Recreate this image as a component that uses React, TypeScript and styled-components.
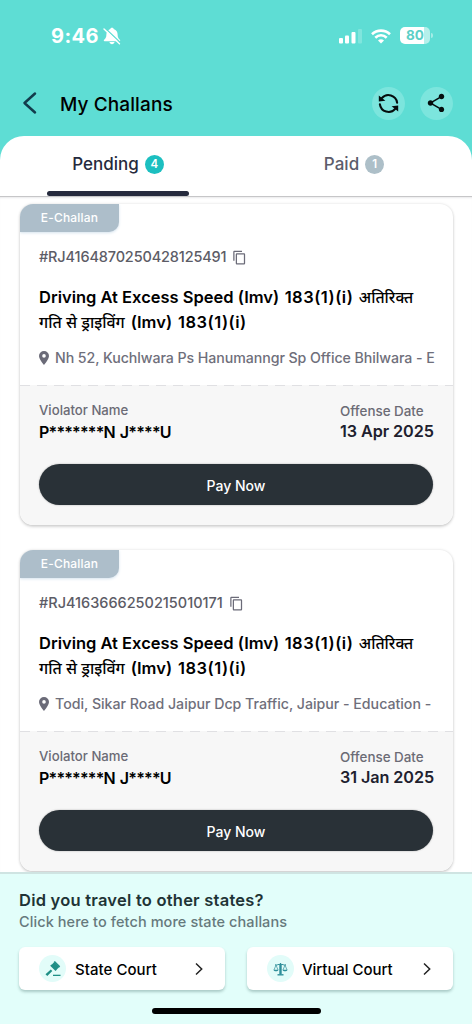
import React from "react";
import styled, { createGlobalStyle } from "styled-components";
import { MdContentCopy, MdShare } from "react-icons/md";

const GlobalStyle = createGlobalStyle`
  * { box-sizing: border-box; }
  body { margin: 0; background: #fff; font-family: Inter, "Noto Sans", sans-serif; }
  button { font-family: inherit; border: 0; padding: 0; }
`;

const Screen = styled.div`
  width: 472px;
  height: 1024px;
  display: flex;
  flex-direction: column;
  overflow: hidden;
  background: #fff;
`;

const Text = styled.span<{ $size: number; $ls?: number; $ws?: number; $weight?: number; $color?: string; $line?: number }>`
  display: block;
  white-space: nowrap;
  font-size: ${(p) => p.$size}px;
  letter-spacing: ${(p) => p.$ls ?? 0}px;
  word-spacing: ${(p) => p.$ws ?? 0}px;
  font-weight: ${(p) => p.$weight ?? 500};
  color: ${(p) => p.$color ?? "#000"};
  line-height: ${(p) => p.$line ?? 20}px;
`;

const Top = styled.header`
  flex: none;
  background: #5eddd4;
`;

const StatusBar = styled.div`
  height: 70px;
  padding: 2px 39px 0 51px;
  display: flex;
  align-items: center;
  justify-content: space-between;
`;

const StatusGroup = styled.div<{ $gap: number }>`
  display: flex;
  align-items: center;
  gap: ${(p) => p.$gap}px;
`;

const Battery = styled.div`
  width: 30px;
  height: 17px;
  border-radius: 5px;
  background: linear-gradient(90deg, #fff 80%, #b4f0eb 80%);
  display: flex;
  align-items: center;
  justify-content: center;
`;

const BatteryWrap = styled.div`
  display: flex;
  align-items: center;
  gap: 1px;
  margin-top: -2px;
  &::after {
    content: "";
    width: 2px;
    height: 5px;
    border-radius: 0 2px 2px 0;
    background: #a5ece6;
  }
`;

const TitleBar = styled.div`
  height: 66px;
  padding: 0 19px 0 22px;
  display: flex;
  align-items: center;
`;

const Title = styled.h1`
  margin: 3px 0 0;
  display: flex;
`;

const BackButton = styled.button`
  width: 38px;
  height: 32px;
  background: none;
  display: flex;
  align-items: center;
`;

const Actions = styled.div`
  margin-left: auto;
  display: flex;
  gap: 15px;
`;

const RoundButton = styled.button<{ $nudge?: number }>`
  width: 33px;
  height: 33px;
  padding-right: ${(p) => p.$nudge ?? 0}px;
  border-radius: 50%;
  background: #7ce5dd;
  color: #050d0d;
  display: flex;
  align-items: center;
  justify-content: center;
`;

const Tabs = styled.nav`
  height: 60px;
  background: #fff;
  border-radius: 24px 24px 0 0;
  display: flex;
`;

const Tab = styled.div`
  flex: 1;
  height: 60px;
  display: flex;
  flex-direction: column;
  align-items: center;
`;

const TabLabel = styled.div`
  height: 55px;
  padding-top: 1px;
  display: flex;
  align-items: center;
  gap: 6px;
`;

const Count = styled.span<{ $bg: string }>`
  width: 19px;
  height: 19px;
  border-radius: 50%;
  background: ${(p) => p.$bg};
  color: #fff;
  font-size: 11.5px;
  font-weight: 600;
  line-height: 19px;
  text-align: center;
`;

const Indicator = styled.div`
  width: 142px;
  height: 5px;
  border-radius: 3px;
  background: #252a3d;
`;

const List = styled.main`
  flex: 1;
  min-height: 0;
  overflow: hidden;
  border-top: 1px solid #c6c6c8;
  box-shadow: inset 0 2px 2px -1px #e9e9eb;
  padding: 7px 19px 0 20px;
  display: flex;
  flex-direction: column;
  gap: 25px;
`;

const Card = styled.article`
  flex: none;
  height: 321px;
  border-radius: 13px;
  background: #fff;
  box-shadow: 0 0 3px rgba(0, 0, 0, 0.13), 0 2px 3px rgba(0, 0, 0, 0.15);
  overflow: hidden;
  display: flex;
  flex-direction: column;
`;

const Tag = styled.div`
  width: 99px;
  height: 28px;
  border-radius: 0 0 10px 0;
  background: #adbeca;
  box-shadow: 0 1px 3px #d5e3ee;
  display: flex;
  align-items: center;
  justify-content: center;
`;

const Summary = styled.div`
  height: 153px;
  padding: 15px 19px 0 19px;
`;

const Row = styled.div<{ $gap: number; $top?: number }>`
  display: flex;
  align-items: center;
  gap: ${(p) => p.$gap}px;
  margin-top: ${(p) => p.$top ?? 0}px;
  color: #6b6b78;
  svg { flex: none; }
`;

const Offense = styled.div`
  margin-top: 18px;
`;

const OffenseLine = styled.div<{ $gap: number }>`
  height: 25px;
  display: flex;
  gap: ${(p) => p.$gap}px;
`;

const Dashes = styled.div`
  height: 1px;
  background: repeating-linear-gradient(90deg, #e0e0e3 0 10px, #f7f7f7 10px 17px);
`;

const Details = styled.div`
  flex: 1;
  background: #f7f7f7;
  padding: 16px 20px 0 19px;
`;

const Facts = styled.div`
  height: 62px;
  display: flex;
  justify-content: space-between;
`;

const Fact = styled.div<{ $top?: number; $width?: number }>`
  padding-top: ${(p) => p.$top ?? 0}px;
  width: ${(p) => (p.$width ? p.$width + "px" : "auto")};
`;

const PayButton = styled.button`
  width: 100%;
  height: 41px;
  border-radius: 21px;
  background: #293137;
  box-shadow: 0 0 2px rgba(0, 0, 0, 0.3);
  display: flex;
  align-items: center;
  justify-content: center;
  padding-top: 2px;
`;

const Footer = styled.footer`
  flex: none;
  height: 152px;
  background: #e2fefa;
  border-top: 2px solid #cfe4e2;
  padding: 16px 19px 0;
  display: flex;
  flex-direction: column;
`;

const Courts = styled.div`
  margin-top: 13px;
  display: grid;
  grid-template-columns: 206px 206px;
  justify-content: space-between;
`;

const CourtButton = styled.button<{ $gap: number }>`
  height: 43px;
  border-radius: 6px;
  background: #fff;
  box-shadow: 0 2px 3px rgba(20, 70, 65, 0.28);
  padding: 0 20px;
  display: flex;
  align-items: center;
  gap: ${(p) => p.$gap}px;
`;

const CourtIcon = styled.span`
  width: 27px;
  height: 27px;
  border-radius: 50%;
  background: #e2fcf9;
  display: flex;
  align-items: center;
  justify-content: center;
`;

const CourtLabel = styled(Text)`
  padding-top: 2px;
`;

const Push = styled.span`
  margin-left: auto;
  display: flex;
`;

const HomeBar = styled.div`
  margin: 18px auto 0;
  width: 169px;
  height: 6px;
  border-radius: 3px;
  background: #000;
`;

const BellOff = () => (
  <svg width="18" height="18" viewBox="0 0 18 18">
    <path d="M9 .8c-1 0-1.500.5-1.700 1.200C4.500 2.900 3.400 5 3.400 7.500c0 3-1 4.200-2.300 5.300-.6.500-.3 1.400.4 1.400h15c.7 0 1-.9.400-1.400-1.300-1.100-2.300-2.300-2.300-5.300C14.600 5 13.500 2.900 10.700 2 10.500 1.300 10 .8 9 .8zM6.500 15h5c-.2 1.400-1.200 2.200-2.500 2.200S6.700 16.400 6.500 15z" fill="#fff" />
    <path d="M2 1l15.500 14.800" stroke="#5eddd4" strokeWidth="1.200" />
    <path d="M1 2l15.500 14.800" stroke="#fff" strokeWidth="1.400" strokeLinecap="round" />
  </svg>
);

const Signal = () => (
  <svg width="23" height="15" viewBox="0 0 23 15">
    <rect x="0" y="9" width="4" height="5.500" rx="1" fill="#fff" />
    <rect x="6" y="6.500" width="4" height="8" rx="1" fill="#fff" />
    <rect x="12.500" y="3" width="4" height="11.500" rx="1" fill="#fff" />
    <rect x="19" y="0" width="4" height="14.500" rx="1" fill="#80e5dd" />
  </svg>
);

const Wifi = () => (
  <svg width="20" height="15" viewBox="0 0 20 15" fill="none" stroke="#fff" strokeWidth="2.600">
    <path d="M1 5.200C6 .4 14 .4 19 5.200" />
    <path d="M4.300 8.700c3.300-3.200 8.100-3.200 11.400 0" />
    <path d="M10 14.500l-3-3c1.700-1.600 4.300-1.600 6 0z" fill="#fff" stroke="none" />
  </svg>
);

const BackIcon = () => (
  <svg width="16" height="24" viewBox="0 0 16 24" fill="none" stroke="#123c4c" strokeWidth="2.500" strokeLinecap="round" strokeLinejoin="round">
    <path d="M13 2.500L2.500 12 13 21.500" />
  </svg>
);

const SyncIcon = () => (
  <svg width="21" height="21" viewBox="0 0 21 21" fill="none" stroke="#050d0d" strokeWidth="2.100">
    <path d="M3.800 5.200A8.700 8.700 0 0 1 19.100 9.600" strokeLinecap="round" />
    <path d="M17.200 15.800A8.700 8.700 0 0 1 1.900 11.400" strokeLinecap="round" />
    <path d="M.8 2.600v6l6.600-.9z" fill="#050d0d" stroke="none" />
    <path d="M20.200 18.400v-6l-6.600.9z" fill="#050d0d" stroke="none" />
  </svg>
);

const PinIcon = () => (
  <svg width="10" height="14" viewBox="0 0 10 14">
    <path d="M5 0a5 5 0 0 0-5 5c0 3.300 5 9 5 9s5-5.700 5-9a5 5 0 0 0-5-5zm0 6.700a1.800 1.800 0 1 1 0-3.600 1.800 1.800 0 0 1 0 3.600z" fill="#6b6b78" />
  </svg>
);

const GavelIcon = () => (
  <svg width="16" height="16" viewBox="0 0 16 16" fill="#1f8f86">
    <path d="M.5 13.200l5.300-4.700 1.500 1.600-5 5z" />
    <path d="M6.200 4.300L9.300 1l5 5-3.300 3.200z" />
    <path d="M8.700 1l1.200-.9 5.300 5.200-1 1.200zM5.200 4.800l1.200-1.200 5.300 5.200-1.200 1.300z" />
    <path d="M8 13.700h7.500v1.300H8z" />
  </svg>
);

const ScalesIcon = () => (
  <svg width="15" height="14" viewBox="0 0 15 14" fill="none" stroke="#2f8f9a" strokeWidth="1">
    <path d="M7.500 1v11.500M6.800 2v10M8.200 2v10" />
    <path d="M2 2.800c2 .6 3.500-.6 5.500-.6s3.500 1.200 5.500.6" />
    <path d="M4.500 12.800h6" strokeWidth="1.400" />
    <path d="M3 3L1 8M3 3l2 5M12 3l-2 5M12 3l2 5" strokeWidth=".7" />
    <path d="M.5 7.800h5c-.4 2-4.600 2-5 0zM9.500 7.800h5c-.4 2-4.600 2-5 0z" fill="#2f8f9a" stroke="none" />
  </svg>
);

const Chevron = () => (
  <svg width="12" height="14" viewBox="0 0 12 14" fill="none" stroke="#222" strokeWidth="1.500">
    <path d="M3 1.500L8.700 7 3 12.500" />
  </svg>
);

type Challan = {
  id: string;
  idSpacing: number;
  place: string;
  placeSpacing: number;
  date: string;
};

const challans: Challan[] = [
  { id: "#RJ4164870250428125491", idSpacing: -0.15, place: "Nh 52, Kuchlwara Ps Hanumanngr Sp Office Bhilwara - E", placeSpacing: -0.07, date: "13 Apr 2025" },
  { id: "#RJ4163666250215010171", idSpacing: -0.01, place: "Todi, Sikar Road Jaipur Dcp Traffic, Jaipur - Education -", placeSpacing: -0.02, date: "31 Jan 2025" },
];

const ChallanCard = ({ c }: { c: Challan }) => (
  <Card>
    <Tag><Text $size={12} $color="#fff" $ls={0.2}>E-Challan</Text></Tag>
    <Summary>
      <Row $gap={6}>
        <Text $size={14.5} $color="#5c5c66" $ls={c.idSpacing}>{c.id}</Text>
        <MdContentCopy size={15} />
      </Row>
      <Offense>
        <OffenseLine $gap={5.5}>
          <Text $size={16.5} $weight={600} $line={25}>Driving At Excess Speed (Imv)</Text>
          <Text $size={16.5} $weight={600} $line={25} $ls={0.5}>183(1)(i)</Text>
          <Text $size={15.7} $weight={500} $line={25}>अतिरिक्त</Text>
        </OffenseLine>
        <OffenseLine $gap={6}>
          <Text $size={15.9} $weight={500} $line={25}>गति से ड्राइविंग</Text>
          <Text $size={16.5} $weight={600} $line={25}>(Imv)</Text>
          <Text $size={16.5} $weight={600} $line={25} $ls={0.5}>183(1)(i)</Text>
        </OffenseLine>
      </Offense>
      <Row $gap={6} $top={13}>
        <PinIcon />
        <Text $size={14.2} $color="#6f6f7b" $ls={c.placeSpacing}>{c.place}</Text>
      </Row>
    </Summary>
    <Dashes />
    <Details>
      <Facts>
        <Fact>
          <Text $size={13.2} $color="#6b6b75" $line={16}>Violator Name</Text>
          <Text $size={16} $weight={600} $line={28} $ls={-0.78} $ws={1.7}>P*******N J****U</Text>
        </Fact>
        <Fact $width={93} $top={1}>
          <Text $size={13.4} $color="#6b6b75" $line={17}>Offense Date</Text>
          <Text $size={16.2} $weight={600} $color="#20202e" $line={22} $ls={-0.08}>{c.date}</Text>
        </Fact>
      </Facts>
      <PayButton><Text $size={14} $color="#fff">Pay Now</Text></PayButton>
    </Details>
  </Card>
);

export default function App() {
  return (
    <Screen>
      <GlobalStyle />
      <Top>
        <StatusBar>
          <StatusGroup $gap={4}>
            <Text $size={20} $weight={700} $color="#fff" $ls={0.4}>9:46</Text>
            <BellOff />
          </StatusGroup>
          <StatusGroup $gap={9}>
            <Signal />
            <Wifi />
            <BatteryWrap>
              <Battery><Text $size={13.5} $weight={700} $color="#5ccfc7" $line={17}>80</Text></Battery>
            </BatteryWrap>
          </StatusGroup>
        </StatusBar>
        <TitleBar>
          <BackButton><BackIcon /></BackButton>
          <Title><Text $size={19} $ls={0.1}>My Challans</Text></Title>
          <Actions>
            <RoundButton><SyncIcon /></RoundButton>
            <RoundButton $nudge={2}><MdShare size={22} /></RoundButton>
          </Actions>
        </TitleBar>
        <Tabs>
          <Tab>
            <TabLabel>
              <Text $size={17} $color="#252a3d">Pending</Text>
              <Count $bg="#1cbfc0">4</Count>
            </TabLabel>
            <Indicator />
          </Tab>
          <Tab>
            <TabLabel>
              <Text $size={17} $color="#5c5c6b">Paid</Text>
              <Count $bg="#adbfc8">1</Count>
            </TabLabel>
          </Tab>
        </Tabs>
      </Top>
      <List>
        {challans.map((c) => <ChallanCard key={c.id} c={c} />)}
      </List>
      <Footer>
        <Text $size={16.5} $color="#1f3436" $weight={600} $ls={0.23}>Did you travel to other states?</Text>
        <Text $size={14.5} $color="#66797c" $line={24} $ls={0.08}>Click here to fetch more state challans</Text>
        <Courts>
          <CourtButton $gap={9}>
            <CourtIcon><GavelIcon /></CourtIcon>
            <CourtLabel $size={15} $ls={0.05}>State Court</CourtLabel>
            <Push><Chevron /></Push>
          </CourtButton>
          <CourtButton $gap={8}>
            <CourtIcon><ScalesIcon /></CourtIcon>
            <CourtLabel $size={15} $ls={-0.05}>Virtual Court</CourtLabel>
            <Push><Chevron /></Push>
          </CourtButton>
        </Courts>
        <HomeBar />
      </Footer>
    </Screen>
  );
}
